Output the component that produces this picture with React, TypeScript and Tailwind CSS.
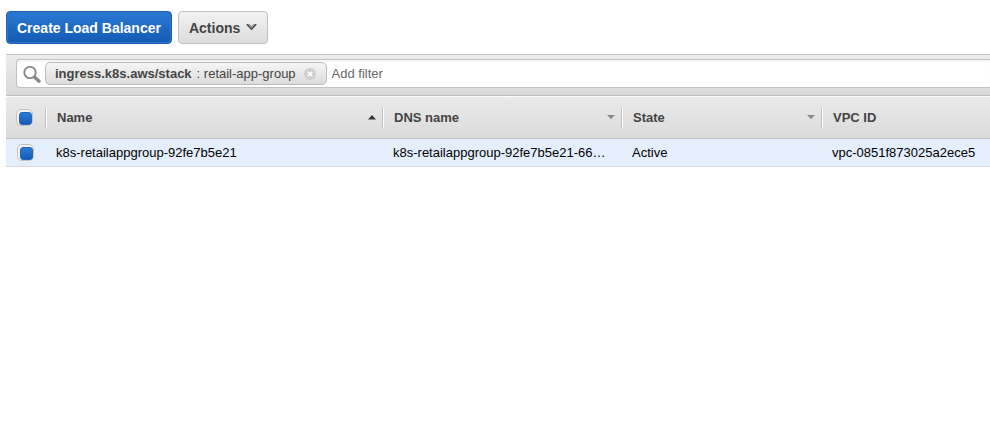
import { useState } from "react";

type SortState = "asc" | "none" | "hidden";

const columns: { label: string; sort: SortState }[] = [
  { label: "Name", sort: "asc" },
  { label: "DNS name", sort: "none" },
  { label: "State", sort: "none" },
  { label: "VPC ID", sort: "hidden" },
];

const rows = [
  {
    name: "k8s-retailappgroup-92fe7b5e21",
    dns: "k8s-retailappgroup-92fe7b5e21-66…",
    state: "Active",
    vpc: "vpc-0851f873025a2ece5",
  },
];

function SelectBox({ label }: { label: string }) {
  const [checked, setChecked] = useState(true);
  return (
    <input
      type="checkbox"
      aria-label={label}
      checked={checked}
      onChange={() => setChecked(!checked)}
      className="block size-[17px] appearance-none rounded-[5px] border border-[#c2c2c2] bg-[#f3f3f0] pl-0.5 pt-0.5 before:block before:size-[13px] before:rounded-[3px] checked:before:border checked:before:border-[#2565b5] checked:before:bg-linear-to-b checked:before:from-[#2b7bd6] checked:before:to-[#155bb5]"
    />
  );
}

function SortArrow({ sort }: { sort: SortState }) {
  if (sort === "hidden") return null;
  return (
    <svg width="8" height="5" viewBox="0 0 8 5" aria-hidden="true">
      {sort === "asc" ? (
        <path d="M4 0 8 4.5H0Z" fill="#333" />
      ) : (
        <>
          <path d="M0 1H8L4 5Z" fill="#fff" />
          <path d="M0 0H8L4 4.4Z" fill="#8a8a8a" />
        </>
      )}
    </svg>
  );
}

export default function App() {
  return (
    <main className="bg-white pl-1.5 pt-[11px] font-['Liberation_Sans',Arial,sans-serif] text-[13px] text-black">
      <div className="flex gap-1.5 pb-2.5 text-sm font-bold">
        <button
          type="button"
          className="h-[33px] whitespace-nowrap rounded border border-[#1c5fb5] bg-linear-to-b from-[#2a79d4] to-[#145ab3] px-2.5 text-white shadow-[inset_0_0_0_1px_#2f74c6]"
        >
          Create Load Balancer
        </button>
        <button
          type="button"
          className="flex h-[33px] items-center gap-1.5 rounded border border-[#bfbfbf] bg-linear-to-b from-[#f2f2f2] to-[#dcdcdc] px-2.5 text-[#444]"
        >
          Actions
          <svg width="11" height="8" viewBox="0 0 11 8" aria-hidden="true" className="-mt-0.5">
            <path d="M0.5 1H3.5L5.5 3.2 7.5 1H10.5L5.5 7Z" fill="#999" />
            <path d="M0.8 1.2 5.5 6.4 10.2 1.2" fill="none" stroke="#444" strokeWidth="1.3" />
          </svg>
        </button>
      </div>

      <div className="border-y border-[#bebebe] bg-linear-to-b from-[#ececec] to-[#d9d9d9] pb-[7px] pl-2.5 pt-1">
        <div className="flex h-[29px] items-center rounded-l border border-r-0 border-[#c2c2c2] bg-white pl-1.5 shadow-[inset_0_2px_2px_#f5f5f5]">
          <svg width="18" height="18" viewBox="0 0 18 18" aria-hidden="true" className="shrink-0">
            <circle cx="7" cy="7.5" r="5.7" fill="none" stroke="#858585" strokeWidth="1.8" />
            <path d="m11.7 12.2 4.4 4" stroke="#858585" strokeWidth="3.2" strokeLinecap="round" />
          </svg>
          <div className="ml-1 flex h-[23px] shrink-0 items-center whitespace-nowrap rounded-[5px] border border-[#bcbcbc] bg-linear-to-b from-[#f5f5f5] to-[#dcdcdc] pl-[9px] pr-2.5 text-[#444]">
            <b>ingress.k8s.aws/stack</b>
            <span className="pl-[5px]">: retail-app-group</span>
            <button type="button" aria-label="Remove filter" className="ml-2">
              <svg width="12" height="12" viewBox="0 0 12 12" aria-hidden="true">
                <circle cx="6" cy="6" r="6" fill="#cfcfcf" />
                <path d="m3.7 3.7 4.6 4.6m0-4.6L3.7 8.3" stroke="#fff" strokeWidth="1.6" />
              </svg>
            </button>
          </div>
          <input
            type="text"
            aria-label="Add filter"
            placeholder="Add filter"
            className="ml-[5px] min-w-0 flex-1 bg-transparent outline-none placeholder:text-[#666]"
          />
        </div>
      </div>

      <table className="w-full table-fixed border-separate border-spacing-0 text-left">
        <colgroup>
          <col className="w-[39px]" />
          <col className="w-[337px]" />
          <col className="w-[239px]" />
          <col className="w-[200px]" />
          <col />
        </colgroup>
        <thead className="text-[#444]">
          <tr className="h-[43px] bg-linear-to-b from-[#ebebeb] to-[#dadada]">
            <th className="border-b border-t border-b-[#bebebe] border-t-white pl-2.5">
              <SelectBox label="Select all load balancers" />
            </th>
            {columns.map((column) => (
              <th
                key={column.label}
                scope="col"
                aria-sort={column.sort === "asc" ? "ascending" : undefined}
                className="border-b border-t border-b-[#bebebe] border-t-white p-0"
              >
                <div className="flex h-5 items-center justify-between border-l border-[#bebebe] pl-[11px] pr-1.5 shadow-[inset_1px_0_0_#fff]">
                  {column.label}
                  <SortArrow sort={column.sort} />
                </div>
              </th>
            ))}
          </tr>
        </thead>
        <tbody>
          {rows.map((row) => (
            <tr key={row.name} className="h-7 bg-[#e5effc] *:border-b *:border-[#d5d9de]">
              <td className="pl-[11px]">
                <SelectBox label={`Select ${row.name}`} />
              </td>
              <td className="truncate pl-[11px]">{row.name}</td>
              <td className="truncate pl-[11px]">{row.dns}</td>
              <td className="truncate pl-[11px]">{row.state}</td>
              <td className="truncate pl-[11px]">{row.vpc}</td>
            </tr>
          ))}
        </tbody>
      </table>
    </main>
  );
}
